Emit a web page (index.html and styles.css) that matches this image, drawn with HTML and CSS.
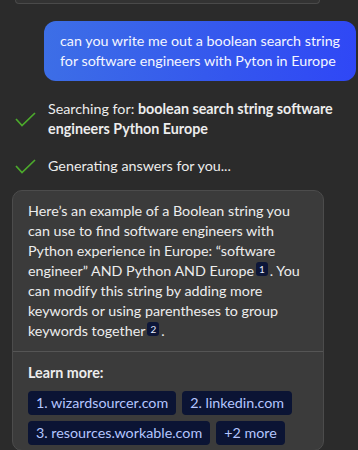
FILE: index.html
```html
<!DOCTYPE html>
<html lang="en">
<head>
  <meta charset="UTF-8" />
  <meta name="viewport" content="width=device-width, initial-scale=1.0" />
  <title>Chat</title>
  <link rel="stylesheet" href="styles.css">
</head>
<body>

  <div class="prev-card"></div>

  <div class="user-msg">
    can you write me out a boolean search string for software engineers with Pyton in Europe
  </div>

  <div class="steps">
    <div class="step">
      <svg class="check" width="21" height="15" viewBox="0 0 21 15">
        <path d="M1 7 L7 13.5 L20 1" fill="none" stroke="#4caa2c" stroke-width="1.7" />
      </svg>
      <p>Searching for: <b>boolean search string software engineers Python Europe</b></p>
    </div>
    <div class="step">
      <svg class="check" width="21" height="15" viewBox="0 0 21 15">
        <path d="M1 7 L7 13.5 L20 1" fill="none" stroke="#4caa2c" stroke-width="1.7" />
      </svg>
      <p>Generating answers for you...</p>
    </div>
  </div>

  <div class="answer">
    <p class="answer-text">
      Here’s an example of a Boolean string you can use to find software engineers with Python experience in Europe: “software engineer” AND Python AND Europe<span class="ref">1</span>. You can modify this string by adding more keywords or using parentheses to group keywords together<span class="ref">2</span>.
    </p>
    <div class="learn">
      <div class="learn-title">Learn more:</div>
      <div class="chips">
        <span class="chip">1. wizardsourcer.com</span>
        <span class="chip">2. linkedin.com</span>
        <span class="chip">3. resources.workable.com</span>
        <span class="chip">+2 more</span>
      </div>
    </div>
  </div>

</body>
</html>
```

FILE: styles.css
```css
body {
  font-family: Lato, 'Noto Sans', sans-serif;
  font-size: 14.3px;
  line-height: 20px;
  background-color: #2b2b2b;
  color: #ededed;
  margin: 0;
  padding: 0;
  overflow: hidden;
}
.prev-card {
  margin-left: 15px;
  width: 303px;
  height: 3px;
  background: #333;
  border: 1px solid #4a4a4a;
  border-top: none;
  border-radius: 0 0 8px 8px;
}
.user-msg {
  margin: 17px 2px 0 44px;
  padding: 10px 10px 10px 16px;
  border-radius: 12px;
  background: linear-gradient(100deg, #3d6fe6 0%, #3456ee 60%, #2f47f6 100%);
  color: #f4f6ff;
}
.steps {
  margin: 18px 0 14px 0;
  display: flex;
  flex-direction: column;
  gap: 17px;
}
.step {
  display: flex;
  align-items: center;
  gap: 12px;
  padding-left: 15px;
}
.step p {
  margin: 0;
  width: 290px;
}
.step b {
  font-weight: 700;
}
.answer {
  margin-left: 12px;
  width: 310px;
  background: #3b3b3b;
  border: 1px solid #4c4c4c;
  border-radius: 10px;
}
.answer-text {
  margin: 0;
  padding: 10px 12px 10px 15px;
}
.ref {
  display: inline-block;
  background: #0d1638;
  color: #e6ecff;
  font-size: 10px;
  line-height: 14px;
  padding: 0 3px;
  border-radius: 3px;
  margin: 0 2px;
  vertical-align: 3px;
}
.learn {
  border-top: 1px solid #555;
  padding: 11px 16px 5px 15px;
}
.learn-title {
  font-weight: 700;
  margin-bottom: 8px;
}
.chips {
  display: flex;
  flex-wrap: wrap;
  gap: 6px;
}
.chip {
  background: #0b1434;
  color: #b4c6ff;
  border-radius: 4px;
  padding: 2px 8px;
}
```
